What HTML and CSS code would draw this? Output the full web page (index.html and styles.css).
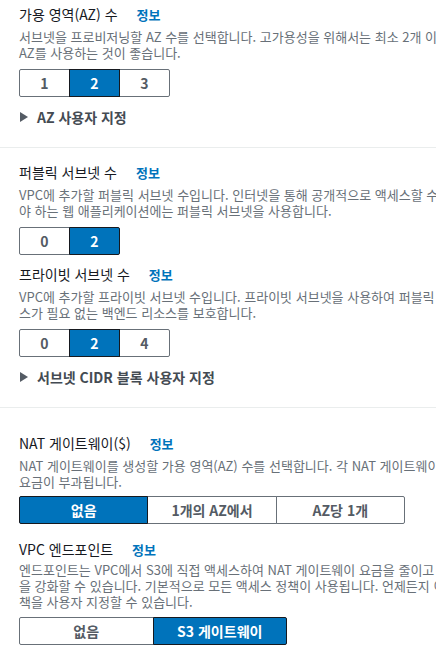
FILE: index.html
```html
<!DOCTYPE html>
<html lang="ko">
<head>
<meta charset="utf-8">
<link rel="stylesheet" href="styles.css">
</head>
<body>
<div class="page">
  <section class="group group-first">
    <div class="field">
      <div class="label">가용 영역(AZ) 수 <a class="info">정보</a></div>
      <div class="desc">서브넷을 프로비저닝할 AZ 수를 선택합니다. 고가용성을 위해서는 최소 2개 이상의<br>AZ를 사용하는 것이 좋습니다.</div>
      <div class="seg seg-small">
        <button class="opt">1</button><button class="opt on">2</button><button class="opt">3</button>
      </div>
    </div>
    <div class="expander"><span class="tri"></span>AZ 사용자 지정</div>
  </section>
  <hr class="divider">
  <section class="group group-second">
    <div class="field">
      <div class="label">퍼블릭 서브넷 수 <a class="info">정보</a></div>
      <div class="desc">VPC에 추가할 퍼블릭 서브넷 수입니다. 인터넷을 통해 공개적으로 액세스할 수 있어<br>야 하는 웹 애플리케이션에는 퍼블릭 서브넷을 사용합니다.</div>
      <div class="seg seg-pair">
        <button class="opt">0</button><button class="opt on">2</button>
      </div>
    </div>
    <div class="field field-next">
      <div class="label">프라이빗 서브넷 수 <a class="info">정보</a></div>
      <div class="desc">VPC에 추가할 프라이빗 서브넷 수입니다. 프라이빗 서브넷을 사용하여 퍼블릭 액세<br>스가 필요 없는 백엔드 리소스를 보호합니다.</div>
      <div class="seg seg-small">
        <button class="opt">0</button><button class="opt on">2</button><button class="opt">4</button>
      </div>
    </div>
    <div class="expander"><span class="tri"></span>서브넷 CIDR 블록 사용자 지정</div>
  </section>
  <hr class="divider">
  <section class="group group-third">
    <div class="field">
      <div class="label">NAT 게이트웨이($) <a class="info">정보</a></div>
      <div class="desc">NAT 게이트웨이를 생성할 가용 영역(AZ) 수를 선택합니다. 각 NAT 게이트웨이마다<br>요금이 부과됩니다.</div>
      <div class="seg seg-nat">
        <button class="opt on">없음</button><button class="opt">1개의 AZ에서</button><button class="opt">AZ당 1개</button>
      </div>
    </div>
    <div class="field field-vpc">
      <div class="label">VPC 엔드포인트 <a class="info">정보</a></div>
      <div class="desc">엔드포인트는 VPC에서 S3에 직접 액세스하여 NAT 게이트웨이 요금을 줄이고 보안<br>을 강화할 수 있습니다. 기본적으로 모든 액세스 정책이 사용됩니다. 언제든지 이 정<br>책을 사용자 지정할 수 있습니다.</div>
      <div class="seg seg-vpc">
        <button class="opt">없음</button><button class="opt on">S3 게이트웨이</button>
      </div>
    </div>
  </section>
</div>
</body>
</html>
```

FILE: styles.css
```css
html, body {
  margin: 0;
  padding: 0;
  overflow: hidden;
  background: #ffffff;
}
body {
  font-family: "Noto Sans CJK KR", "Noto Sans", sans-serif;
  color: #16191f;
  width: 436px;
  height: 661px;
}
.page {
  width: 436px;
}
.group {
  padding-left: 19px;
}
.group-first {
  padding-top: 4px;
}
.group-second {
  padding-top: 14px;
}
.group-third {
  padding-top: 25px;
}
.label {
  font-size: 14px;
  line-height: 20px;
  color: #16191f;
  white-space: nowrap;
}
.info {
  margin-left: 15px;
  font-size: 13px;
  font-weight: 700;
  color: #0073bb;
}
.desc {
  margin-top: 4px;
  font-size: 13px;
  line-height: 16px;
  color: #687078;
  white-space: nowrap;
}
.field-next {
  margin-top: 9px;
}
.field-vpc {
  margin-top: 15px;
}
.field-vpc .desc {
  margin-top: 2px;
}
.seg {
  display: flex;
  margin-top: 8px;
  height: 28px;
}
.group-third .field:first-child .seg {
  margin-top: 6px;
}
.field-vpc .seg {
  margin-top: 7px;
}
.seg-small { width: 151px; }
.seg-pair { width: 101px; }
.seg-nat { width: 386px; }
.seg-vpc { width: 268px; }
.opt {
  flex: 1 1 0;
  min-width: 0;
  margin: 0 0 0 -1px;
  padding: 0;
  border: 1px solid #687078;
  background: #ffffff;
  color: #545b64;
  font-family: "Noto Sans CJK KR", "Noto Sans", sans-serif;
  font-size: 14px;
  font-weight: 700;
  line-height: 20px;
  position: relative;
}
.opt:first-child {
  margin-left: 0;
  border-radius: 2px 0 0 2px;
}
.opt:last-child {
  border-radius: 0 2px 2px 0;
}
.opt.on {
  background: #0073bb;
  border-color: #16191f;
  color: #ffffff;
  z-index: 1;
}
.expander {
  margin-top: 10px;
  display: flex;
  align-items: center;
  font-size: 14px;
  line-height: 20px;
  font-weight: 700;
  color: #444b53;
  white-space: nowrap;
}
.tri {
  width: 0;
  height: 0;
  border-top: 5px solid transparent;
  border-bottom: 5px solid transparent;
  border-left: 8px solid #545b64;
  margin: 0 9px 0 1px;
}
.divider {
  margin: 20px 0 0 0;
  border: 0;
  border-top: 1px solid #eaeded;
  height: 0;
}
```
